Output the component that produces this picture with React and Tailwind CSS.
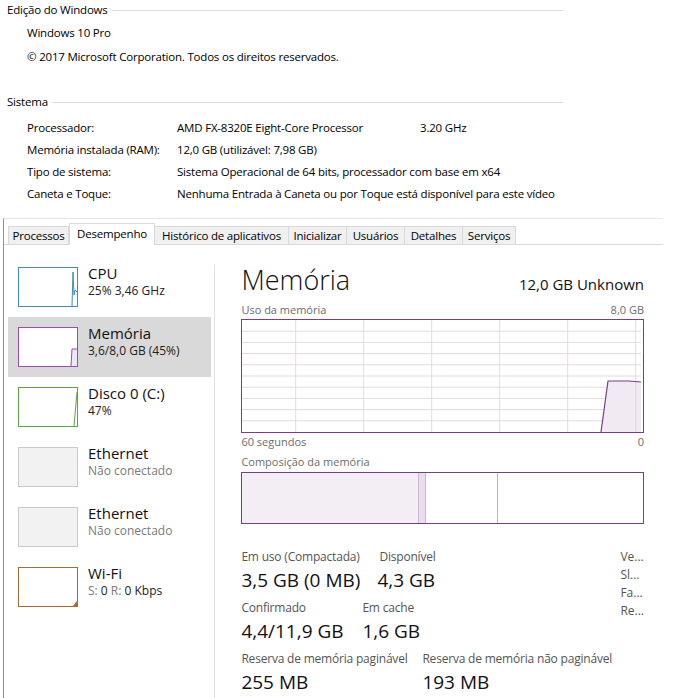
import React from "react";

const tabs = [
  { label: "Processos", w: "w-[61px]" },
  { label: "Desempenho", w: "w-[86px]", active: true },
  { label: "Histórico de aplicativos", w: "w-[134px]" },
  { label: "Inicializar", w: "w-[58px]" },
  { label: "Usuários", w: "w-[58px]" },
  { label: "Detalhes", w: "w-[58px]" },
  { label: "Serviços", w: "w-[53px]" },
];

function Thumb({ kind }) {
  if (kind === "cpu")
    return (
      <div className="w-[60px] h-[40px] border border-[#3c8fb5] bg-white">
        <svg width="58" height="38" className="block">
          <polyline points="53,38 54,4 55,27 56,22 58,24" fill="none" stroke="#3c8fb5" strokeWidth="1" />
        </svg>
      </div>
    );
  if (kind === "mem")
    return (
      <div className="w-[60px] h-[40px] border border-[#9a4cb3] bg-white">
        <svg width="58" height="38" className="block">
          <polygon points="52,38 53,21 58,21 58,38" fill="#f1e6f4" />
          <polyline points="52,38 53,21 58,21" fill="none" stroke="#9a4cb3" strokeWidth="1" />
        </svg>
      </div>
    );
  if (kind === "disk")
    return (
      <div className="w-[60px] h-[40px] border border-[#5aa83a] bg-white">
        <svg width="58" height="38" className="block">
          <polyline points="55,38 58,4" fill="none" stroke="#5aa83a" strokeWidth="1" />
        </svg>
      </div>
    );
  if (kind === "wifi")
    return (
      <div className="w-[60px] h-[40px] border border-[#a8692a] bg-white">
        <svg width="58" height="38" className="block">
          <polygon points="54,38 58,33 58,38" fill="#a8692a" />
        </svg>
      </div>
    );
  return <div className="w-[60px] h-[40px] border border-[#c9c9c9] bg-[#f2f2f2]" />;
}

function SideItem({ kind, title, sub, active }) {
  return (
    <div className={`h-[60px] flex items-center pl-[10px] gap-[10px] ${active ? "bg-[#d9d9d9]" : ""}`}>
      <Thumb kind={kind} />
      <div className="flex flex-col self-start pt-[6px]">
        <div className="text-[15px] leading-[20px] text-[#111]">{title}</div>
        <div className="text-[12px] leading-[15px] text-[#222]">{sub}</div>
      </div>
    </div>
  );
}

export default function App() {
  const hLines = [];
  for (let i = 1; i < 10; i++) hLines.push(i * 11.2);
  const vLines = [53.7, 121.7, 189.7, 257.7, 325.7, 393.7];
  return (
    <div className="w-[680px] h-[698px] bg-white overflow-hidden font-['Open_Sans',sans-serif] text-black">
      {/* System properties */}
      <div className="pl-[7px] text-[11.5px] tracking-[-0.2px]">
        <div className="h-[20px] flex items-center w-[556px]">
          <span className="leading-none">Edição do Windows</span>
          <div className="flex-1 h-px bg-[#d6dce2] ml-[4px]" />
        </div>
        <div className="pl-[20px] mt-[3px] h-[20px] flex items-center">Windows 10 Pro</div>
        <div className="pl-[20px] mt-[4px] h-[20px] flex items-center">© 2017 Microsoft Corporation. Todos os direitos reservados.</div>
        <div className="h-[20px] mt-[25px] flex items-center w-[556px]">
          <span className="leading-none">Sistema</span>
          <div className="flex-1 h-px bg-[#d6dce2] ml-[4px]" />
        </div>
        <div className="pl-[20px] mt-[5px]">
          {[
            ["Processador:", "AMD FX-8320E Eight-Core Processor", "3.20 GHz"],
            ["Memória instalada (RAM):", "12,0 GB (utilizável: 7,98 GB)"],
            ["Tipo de sistema:", "Sistema Operacional de 64 bits, processador com base em x64"],
            ["Caneta e Toque:", "Nenhuma Entrada à Caneta ou por Toque está disponível para este vídeo"],
          ].map(([a, b, c]) => (
            <div key={a} className="h-[22px] flex items-center whitespace-nowrap">
              <div className="w-[150px]">{a}</div>
              <div className={c ? "w-[243px]" : ""}>{b}</div>
              {c && <div>{c}</div>}
            </div>
          ))}
        </div>
      </div>

      {/* Task manager */}
      <div className="mt-[13px] ml-[3px] w-[660px] h-[480px] border-l border-t border-l-[#7d95ad] border-t-[#e6e6e6] flex flex-col">
        <div className="h-[26px] flex items-end pl-[4px] border-b border-[#d9d9d9]">
          {tabs.map((t) =>
            t.active ? (
              <div
                key={t.label}
                className={`${t.w} h-[22px] -mb-px bg-white border border-b-0 border-[#d9d9d9] flex items-center justify-center text-[11.5px] tracking-[-0.2px] pb-[1px] relative z-10`}
              >
                {t.label}
              </div>
            ) : (
              <div
                key={t.label}
                className={`${t.w} h-[18px] bg-[#f0f0f0] border-t border-r border-[#d9d9d9] first:border-l flex items-center justify-center text-[11.5px] tracking-[-0.2px]`}
              >
                {t.label}
              </div>
            )
          )}
        </div>
        <div className="flex flex-1">
          {/* sidebar */}
          <div className="w-[211px] pt-[12px] pl-[4px] pr-[3px]">
            <SideItem kind="cpu" title="CPU" sub="25% 3,46 GHz" />
            <SideItem kind="mem" title="Memória" sub="3,6/8,0 GB (45%)" active />
            <SideItem kind="disk" title="Disco 0 (C:)" sub="47%" />
            <SideItem kind="eth" title="Ethernet" sub={<span className="text-[#7a7a7a]">Não conectado</span>} />
            <SideItem kind="eth" title="Ethernet" sub={<span className="text-[#7a7a7a]">Não conectado</span>} />
            <SideItem
              kind="wifi"
              title="Wi-Fi"
              sub={
                <span>
                  <span className="text-[#7a7a7a]">S:</span> 0 <span className="text-[#7a7a7a]">R:</span> 0 Kbps
                </span>
              }
            />
          </div>
          <div className="w-px bg-[#e2e2e2] mt-[20px]" />
          {/* main pane */}
          <div className="flex-1 pl-[26px] pr-[19px] pt-[17px]">
            <div className="h-[36px] flex items-baseline justify-between">
              <div className="text-[27px] font-light leading-[36px] text-[#111]">Memória</div>
              <div className="text-[15px] text-[#111]">12,0 GB Unknown</div>
            </div>
            <div className="mt-[5px] h-[14px] flex items-center justify-between text-[11px] text-[#6d6d6d]">
              <span>Uso da memória</span>
              <span>8,0 GB</span>
            </div>
            <div className="mt-[2px] h-[114px] border border-[#7b3a8d]">
              <svg width="399" height="112" className="block">
                {hLines.map((y) => (
                  <line key={"h" + y} x1="0" x2="399" y1={y} y2={y} stroke="#e2dae6" strokeWidth="1" />
                ))}
                {vLines.map((x) => (
                  <line key={"v" + x} x1={x} x2={x} y1="0" y2="112" stroke="#e2dae6" strokeWidth="1" />
                ))}
                <polygon points="359,112 366,61 387,61 399,62 399,112" fill="#f1eaf3" />
                <line x1="393.7" x2="393.7" y1="62" y2="112" stroke="#ddd2e2" strokeWidth="1" />
                <polyline points="359,112 366,61 387,61 399,62" fill="none" stroke="#7b3a8d" strokeWidth="1.2" />
              </svg>
            </div>
            <div className="mt-[2px] h-[14px] flex items-center justify-between text-[11px] text-[#6d6d6d]">
              <span>60 segundos</span>
              <span>0</span>
            </div>
            <div className="mt-[6px] h-[14px] flex items-center text-[11px] text-[#6d6d6d]">
              Composição da memória
            </div>
            <div className="mt-[3px] h-[52px] border border-[#7b3a8d] flex">
              <div className="w-[176px] bg-[#f2eef4]" />
              <div className="w-[8px] bg-[#e9dded] border-l border-r border-[#cbb8d2]" />
              <div className="w-[72px] border-r border-[#c3b3c9]" />
              <div className="flex-1" />
            </div>
            <div className="mt-[25px] flex">
              <div className="w-[379px]">
                <div className="flex">
                  <div className="w-[138px]">
                    <div className="h-[16px] flex items-center text-[12px] tracking-[-0.2px] text-[#555]">Em uso (Compactada)</div>
                    <div className="mt-[3px] h-[24px] flex items-center text-[19px] text-[#111]">3,5 GB (0 MB)</div>
                  </div>
                  <div>
                    <div className="h-[16px] flex items-center text-[12px] tracking-[-0.2px] text-[#555]">Disponível</div>
                    <div className="mt-[3px] h-[24px] flex items-center text-[19px] text-[#111] -ml-[2px]">4,3 GB</div>
                  </div>
                </div>
                <div className="flex mt-[8px]">
                  <div className="w-[121px]">
                    <div className="h-[16px] flex items-center text-[12px] tracking-[-0.2px] text-[#555]">Confirmado</div>
                    <div className="mt-[3px] h-[24px] flex items-center text-[19px] text-[#111]">4,4/11,9 GB</div>
                  </div>
                  <div>
                    <div className="h-[16px] flex items-center text-[12px] tracking-[-0.2px] text-[#555]">Em cache</div>
                    <div className="mt-[3px] h-[24px] flex items-center text-[19px] text-[#111]">1,6 GB</div>
                  </div>
                </div>
                <div className="flex mt-[8px]">
                  <div className="w-[181px]">
                    <div className="h-[16px] flex items-center text-[12px] tracking-[-0.2px] text-[#555] whitespace-nowrap">Reserva de memória paginável</div>
                    <div className="mt-[3px] h-[24px] flex items-center text-[19px] text-[#111]">255 MB</div>
                  </div>
                  <div>
                    <div className="h-[16px] flex items-center text-[12px] tracking-[-0.2px] text-[#555] whitespace-nowrap">Reserva de memória não paginável</div>
                    <div className="mt-[3px] h-[24px] flex items-center text-[19px] text-[#111]">193 MB</div>
                  </div>
                </div>
              </div>
              <div className="text-[12px] leading-[18px] text-[#555] -mt-[1px]">
                <div>Ve...</div>
                <div>Sl...</div>
                <div>Fa...</div>
                <div>Re...</div>
              </div>
            </div>
          </div>
        </div>
      </div>
    </div>
  );
}
